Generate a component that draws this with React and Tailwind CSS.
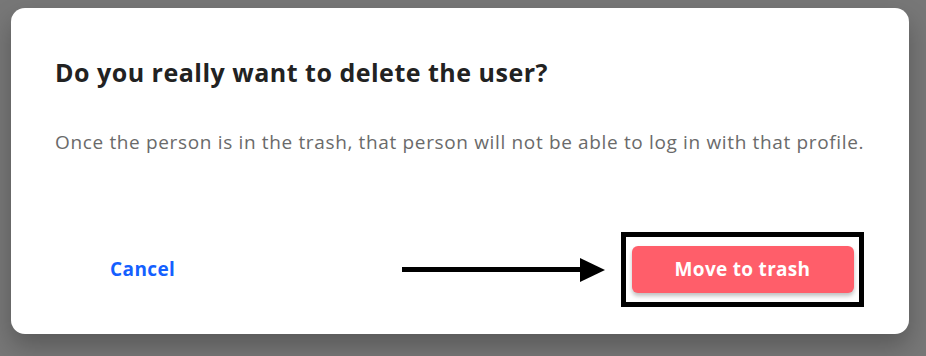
export default function App() {
  return (
    <div className="w-[926px] h-[356px] bg-[#777777] pt-[8px] pl-[11px] overflow-hidden" style={{ fontFamily: "'Open Sans', 'Noto Sans', sans-serif" }}>
      <div className="w-[898px] h-[326px] bg-white rounded-[14px] shadow-[0_12px_24px_rgba(0,0,0,0.25)] flex flex-col pl-[44px]">
        <h2 className="mt-[46px] text-[25px] leading-[36px] font-bold tracking-[0.5px] text-[#222222]">Do you really want to delete the user?</h2>
        <p className="mt-[40px] text-[19px] leading-[24px] tracking-[0.65px] text-[#6a6a6a]">Once the person is in the trash, that person will not be able to log in with that profile.</p>
        <div className="mt-[78px] flex items-center">
          <div className="w-[347px] pl-[55px]">
            <button className="text-[19px] font-bold tracking-[0.4px] text-[#1460ff]">Cancel</button>
          </div>
          <div className="w-[203px] flex items-center">
            <div className="w-[180px] h-[5px] bg-black" />
            <svg width="25" height="24" viewBox="0 0 25 24" className="-ml-[2px]"><polygon points="0,0 25,12 0,24" fill="black" /></svg>
          </div>
          <div className="ml-[16px] border-[5px] border-black w-[243px] h-[75px] flex items-center justify-center">
            <button className="w-[222px] h-[47px] rounded-[6px] bg-[#ff5e6a] text-white text-[19px] font-bold tracking-[0.3px] shadow-[0_3px_4px_rgba(0,0,0,0.25)]">Move to trash</button>
          </div>
        </div>
      </div>
    </div>
  );
}
